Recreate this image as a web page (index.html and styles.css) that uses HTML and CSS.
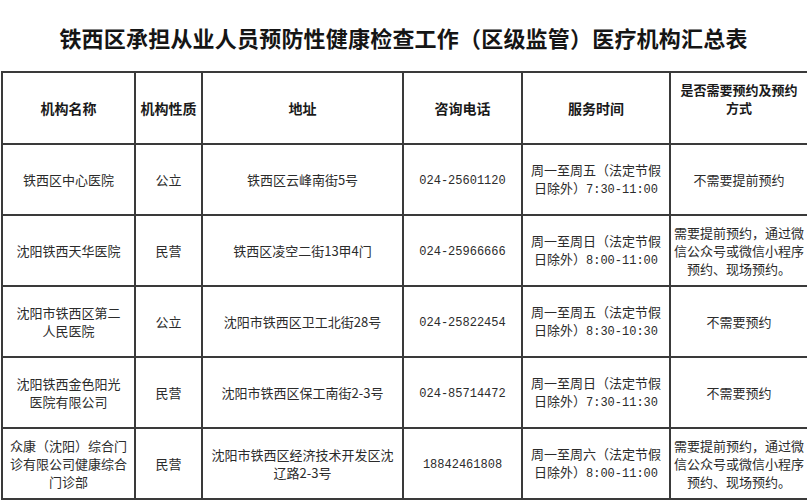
FILE: index.html
```html
<!DOCTYPE html>
<html lang="zh-CN">
<head>
<meta charset="utf-8">
<title>医疗机构汇总表</title>
<link rel="stylesheet" href="styles.css">
</head>
<body>
<div class="page">
  <div class="title-bar">
    <h1 class="title">铁西区承担从业人员预防性健康检查工作（区级监管）医疗机构汇总表</h1>
  </div>
  <table class="sheet">
    <colgroup>
      <col class="c-name"><col class="c-type"><col class="c-addr"><col class="c-tel"><col class="c-time"><col class="c-resv">
    </colgroup>
    <thead>
      <tr class="head-row">
        <th>机构名称</th>
        <th>机构性质</th>
        <th>地址</th>
        <th>咨询电话</th>
        <th>服务时间</th>
        <th class="th-tight">是否需要预约及预约<br>方式</th>
      </tr>
    </thead>
    <tbody>
      <tr>
        <td>铁西区中心医院</td>
        <td>公立</td>
        <td>铁西区云峰南街5号</td>
        <td><span class="num">024-25601120</span></td>
        <td>周一至周五（法定节假<br>日除外）<span class="num">7:30-11:00</span></td>
        <td>不需要提前预约</td>
      </tr>
      <tr>
        <td>沈阳铁西天华医院</td>
        <td>民营</td>
        <td>铁西区凌空二街13甲4门</td>
        <td><span class="num">024-25966666</span></td>
        <td>周一至周日（法定节假<br>日除外）<span class="num">8:00-11:00</span></td>
        <td>需要提前预约，通过微<br>信公众号或微信小程序<br>预约、现场预约。</td>
      </tr>
      <tr>
        <td>沈阳市铁西区第二<br>人民医院</td>
        <td>公立</td>
        <td>沈阳市铁西区卫工北街28号</td>
        <td><span class="num">024-25822454</span></td>
        <td>周一至周五（法定节假<br>日除外）<span class="num">8:30-10:30</span></td>
        <td>不需要预约</td>
      </tr>
      <tr>
        <td>沈阳铁西金色阳光<br>医院有限公司</td>
        <td>民营</td>
        <td>沈阳市铁西区保工南街2-3号</td>
        <td><span class="num">024-85714472</span></td>
        <td>周一至周日（法定节假<br>日除外）<span class="num">7:30-11:30</span></td>
        <td>不需要预约</td>
      </tr>
      <tr>
        <td>众康（沈阳）综合门<br>诊有限公司健康综合<br>门诊部</td>
        <td>民营</td>
        <td>沈阳市铁西区经济技术开发区沈<br>辽路2-3号</td>
        <td><span class="num">18842461808</span></td>
        <td>周一至周六（法定节假<br>日除外）<span class="num">8:00-11:00</span></td>
        <td>需要提前预约，通过微<br>信公众号或微信小程序<br>预约、现场预约。</td>
      </tr>
    </tbody>
  </table>
</div>
</body>
</html>
```
FILE: styles.css
```css
html, body {
  margin: 0;
  padding: 0;
  background: #ffffff;
}

body {
  font-family: "Noto Sans CJK SC", "Noto Sans", sans-serif;
  color: #2b2b2b;
  width: 807px;
  height: 500px;
  overflow: hidden;
}

.page {
  width: 807px;
}

.title-bar {
  height: 71px;
  display: flex;
  align-items: center;
  justify-content: center;
  box-sizing: border-box;
  padding-top: 3px;
}

.title {
  margin: 0;
  font-size: 22px;
  font-weight: 700;
  color: #151515;
  letter-spacing: 0.2px;
  white-space: nowrap;
}

.sheet {
  border-collapse: collapse;
  table-layout: fixed;
  width: 806px;
  margin-left: 1px;
}

.c-name { width: 133px; }
.c-type { width: 67px; }
.c-addr { width: 201px; }
.c-tel  { width: 119px; }
.c-time { width: 148px; }
.c-resv { width: 138px; }

.sheet th,
.sheet td {
  border: 2px solid #3a3a3a;
  text-align: center;
  vertical-align: middle;
  padding: 0 2px;
  white-space: nowrap;
  overflow: hidden;
}

.sheet th {
  font-size: 14px;
  font-weight: 700;
  color: #1a1a1a;
  line-height: 16px;
}

.sheet th.th-tight {
  font-size: 13px;
  line-height: 18px;
  vertical-align: top;
  padding-top: 8px;
}

.head-row {
  height: 72px;
}

.sheet tbody tr {
  height: 71px;
}

.sheet td {
  font-size: 13px;
  line-height: 18px;
  font-weight: 400;
}

.num {
  font-family: "Liberation Mono", "DejaVu Sans Mono", monospace;
  font-size: 12px;
}
```
